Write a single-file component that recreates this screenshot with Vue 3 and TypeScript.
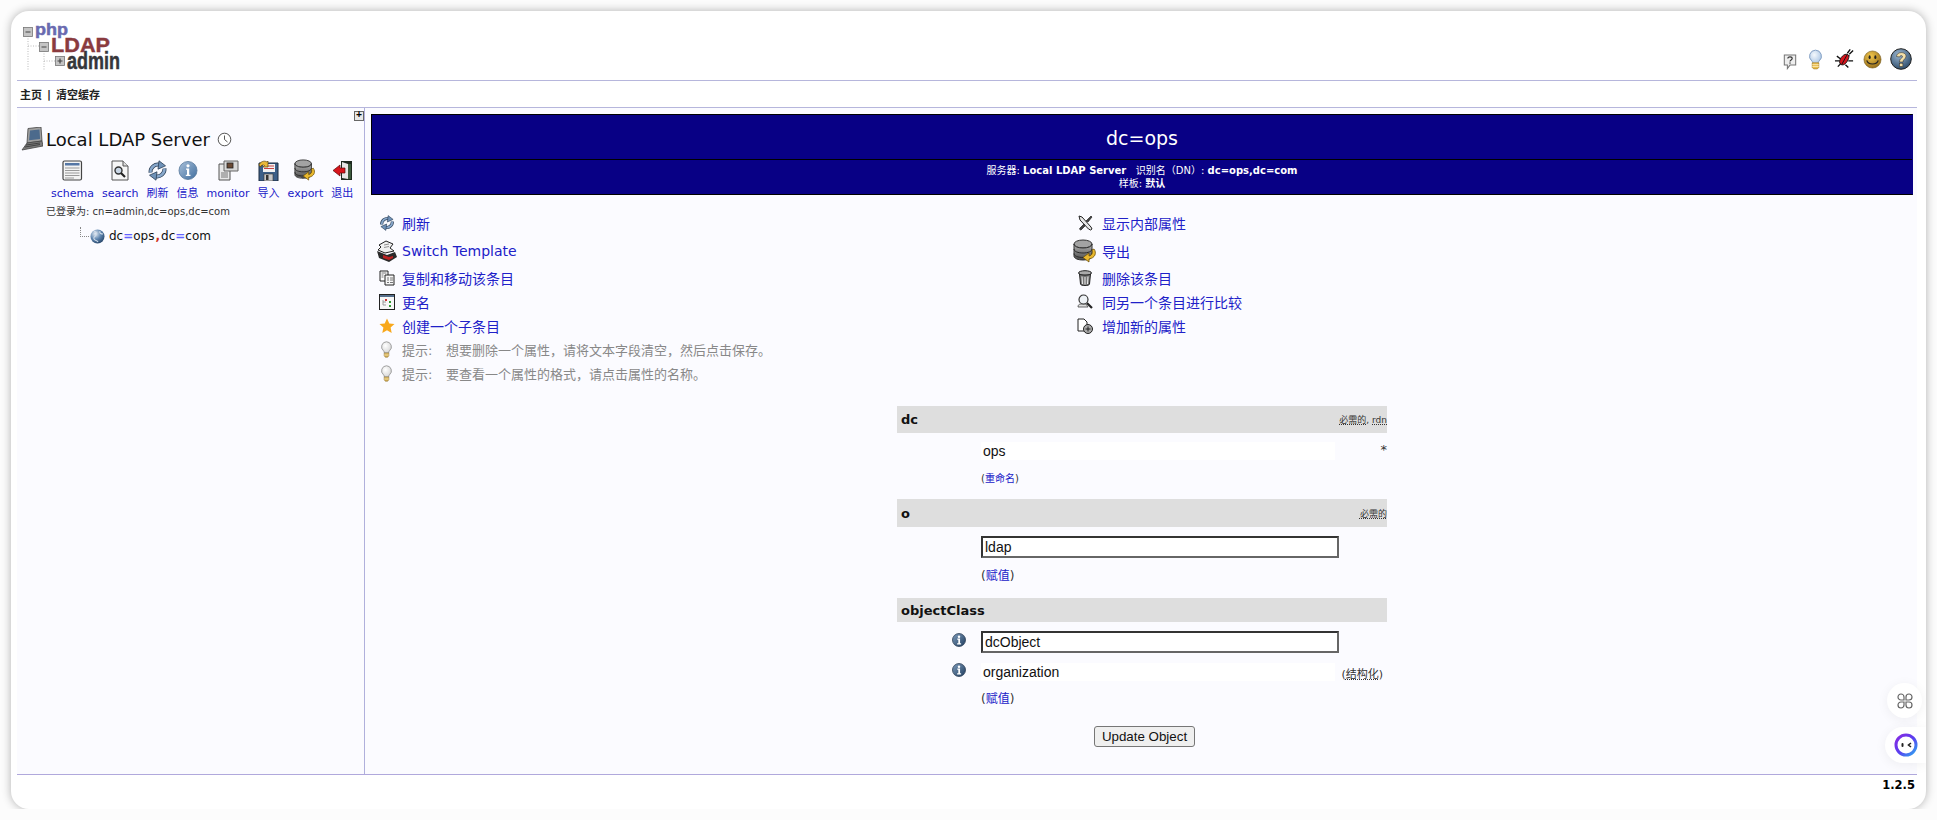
<script setup lang="ts">
interface Tool { icon: string; label: string; w: number; h: number }
const tools: Tool[] = [
  { icon: 'schema', label: 'schema', w: 21, h: 21 },
  { icon: 'search', label: 'search', w: 18, h: 21 },
  { icon: 'refresh', label: '刷新', w: 21, h: 21 },
  { icon: 'info', label: '信息', w: 20, h: 20 },
  { icon: 'monitor', label: 'monitor', w: 21, h: 21 },
  { icon: 'import', label: '导入', w: 21, h: 21 },
  { icon: 'export', label: 'export', w: 22, h: 22 },
  { icon: 'logout', label: '退出', w: 21, h: 21 },
]
interface Action { icon: string; label: string; size: number; h: number }
const actions: Action[] = [
  { icon: 'refresh', label: '刷新', size: 16, h: 25 },
  { icon: 'tools', label: '显示内部属性', size: 16, h: 25 },
  { icon: 'template', label: 'Switch Template', size: 22, h: 31 },
  { icon: 'export', label: '导出', size: 24, h: 31 },
  { icon: 'copy', label: '复制和移动该条目', size: 16, h: 23 },
  { icon: 'trash', label: '删除该条目', size: 16, h: 23 },
  { icon: 'rename', label: '更名', size: 16, h: 25 },
  { icon: 'compare', label: '同另一个条目进行比较', size: 16, h: 25 },
  { icon: 'star', label: '创建一个子条目', size: 16, h: 23 },
  { icon: 'add', label: '增加新的属性', size: 16, h: 23 },
]
const tips = ['想要删除一个属性，请将文本字段清空，然后点击保存。', '要查看一个属性的格式，请点击属性的名称。']
const topIcons = [
  { icon: 'chat', w: 14, h: 16 },
  { icon: 'bulb-top', w: 15, h: 21 },
  { icon: 'bug', w: 21, h: 22 },
  { icon: 'smile', w: 19, h: 20 },
  { icon: 'help', w: 22, h: 22 },
]
</script>

<template>
  <svg class="defs" width="0" height="0" aria-hidden="true">
    <defs>
      <linearGradient id="gBlue" x1="0" y1="0" x2="1" y2="1"><stop offset="0" stop-color="#a9c0da" /><stop offset="1" stop-color="#3f6d9e" /></linearGradient>
      <linearGradient id="gBlueD" x1="0" y1="0" x2="1" y2="1"><stop offset="0" stop-color="#7f9cbc" /><stop offset="1" stop-color="#1e3c5e" /></linearGradient>
      <linearGradient id="gGrey" x1="0" y1="0" x2="0" y2="1"><stop offset="0" stop-color="#b5b5b5" /><stop offset="1" stop-color="#4a4a4a" /></linearGradient>
      <radialGradient id="gGlobe" cx=".35" cy=".3" r=".8"><stop offset="0" stop-color="#e8eef5" /><stop offset=".5" stop-color="#5f86b0" /><stop offset="1" stop-color="#1f3d60" /></radialGradient>
      <radialGradient id="gGold" cx=".4" cy=".3" r=".8"><stop offset="0" stop-color="#f2c84e" /><stop offset="1" stop-color="#8d6414" /></radialGradient>
      <radialGradient id="gHelp" cx=".4" cy=".3" r=".8"><stop offset="0" stop-color="#9db8d2" /><stop offset="1" stop-color="#21405f" /></radialGradient>
      <radialGradient id="gGlass" cx=".4" cy=".35" r=".7"><stop offset="0" stop-color="#ffffff" /><stop offset="1" stop-color="#d4d4d4" /></radialGradient>
      <radialGradient id="gGlassB" cx=".4" cy=".35" r=".7"><stop offset="0" stop-color="#f4f8fc" /><stop offset="1" stop-color="#a8c4e4" /></radialGradient>
      <linearGradient id="gRing" x1="0" y1="0" x2="1" y2="1"><stop offset="0" stop-color="#8a2be2" /><stop offset=".5" stop-color="#5a3df0" /><stop offset="1" stop-color="#2fa8f0" /></linearGradient>
    </defs>
    <symbol id="schema" viewBox="0 0 21 21">
      <rect x="1" y="1" width="18.5" height="19" rx="1.500" fill="#f4f4f4" stroke="#444" stroke-width="1.200" />
      <rect x="3" y="3" width="14.500" height="2.500" fill="#5577a5" />
      <path d="M3 8h14.500M3 10.500h14.500M3 13h14.500M3 15.500h14.500M3 18h9" stroke="#9a9a9a" stroke-width="1" />
    </symbol>
    <symbol id="search" viewBox="0 0 18 21">
      <path d="M1 1h11l5 5v14H1z" fill="#f6f6f6" stroke="#555" />
      <path d="M12 1v5h5" fill="#ddd" stroke="#555" />
      <circle cx="7.500" cy="10.500" r="3.500" fill="#c9d6e4" stroke="#333" stroke-width="1.400" />
      <path d="M10 13l4 4" stroke="#222" stroke-width="2.200" />
    </symbol>
    <symbol id="refresh" viewBox="0 0 21 21">
      <g id="refresh-half">
        <path d="M3.500 12.500A7.500 7.500 0 0 1 13 4.800" fill="none" stroke="#2c3f55" stroke-width="4" />
        <path d="M3.500 12.500A7.500 7.500 0 0 1 13 4.800" fill="none" stroke="#88a8cc" stroke-width="2.400" />
        <path d="M12 .8l6.500 5-7.500 3.400z" fill="#6f92b8" stroke="#2c3f55" stroke-width=".8" />
      </g>
      <use href="#refresh-half" transform="rotate(180 10.500 10.500)" />
    </symbol>
    <symbol id="info" viewBox="0 0 20 20">
      <circle cx="10" cy="10.500" r="9" fill="url(#gBlue)" stroke="#56779a" stroke-width=".8" />
      <circle cx="10" cy="5.800" r="1.600" fill="#fff" />
      <path d="M8 8.500h3.200v6.200H12.500V16H7.800v-1.300H9V9.800H8z" fill="#fff" />
    </symbol>
    <symbol id="info-d" viewBox="0 0 20 20">
      <circle cx="10" cy="10" r="9.300" fill="url(#gBlueD)" stroke="#1c2f46" stroke-width="1" />
      <circle cx="10" cy="5.300" r="1.800" fill="#fff" />
      <path d="M7.500 8h4v6.700H13V16.300H7.300v-1.600H9V9.600H7.500z" fill="#fff" />
    </symbol>
    <symbol id="monitor" viewBox="0 0 21 21">
      <path d="M1 4h11v16H1z" fill="#e8e8e8" stroke="#555" />
      <path d="M6 1h14v10H6z" fill="#d8d8d8" stroke="#666" />
      <rect x="9" y="3" width="6" height="5" fill="#6b4a35" stroke="#222" stroke-width=".8" />
      <path d="M3 13h7M3 15h7M3 17h7" stroke="#777" />
    </symbol>
    <symbol id="import" viewBox="0 0 21 21">
      <path d="M1 3h19v18H1z" fill="#3c5f88" stroke="#1d2c40" />
      <rect x="5" y="4" width="12" height="8" fill="#f2f2f2" />
      <path d="M6 6h10M6 8.500h10" stroke="#c44" />
      <rect x="6" y="14" width="9" height="7" fill="#c8c8c8" stroke="#333" stroke-width=".6" />
      <rect x="8" y="15" width="2.500" height="5" fill="#333" />
      <path d="M1 5c1-3 5-5 8-3l1-1v6H5l1.500-1.500C5 4.500 3 5 2.500 7z" fill="#e9b93a" stroke="#5e4408" stroke-width=".7" />
    </symbol>
    <symbol id="export" viewBox="0 0 24 24">
      <ellipse cx="10" cy="5" rx="9" ry="4" fill="#a3a3a3" stroke="#333" />
      <path d="M1 5v12c0 2.500 4 4 9 4s9-1.500 9-4V5c0 2.500-4 4-9 4s-9-1.500-9-4z" fill="url(#gGrey)" stroke="#333" />
      <path d="M1 10c0 2.500 4 4 9 4s9-1.500 9-4M1 14.500c0 2.500 4 4 9 4s9-1.500 9-4" fill="none" stroke="#2a2a2a" />
      <path d="M21 10c3 4 1 9-5 10v3l-6-4.500 6-4.500v3c3-.5 4-3.500 3-6z" fill="#eab92e" stroke="#6e5208" stroke-width=".8" />
    </symbol>
    <symbol id="logout" viewBox="0 0 21 21">
      <path d="M9 1h11v19H9z" fill="#1e2a20" />
      <path d="M10 2l6 2v15l-6-1z" fill="#e6e6e6" />
      <path d="M16 4h3v15h-3z" fill="#3c5a3e" />
      <path d="M1 10.500L8 5v3h5v5H8v3z" fill="#d8141c" stroke="#5a0a0a" stroke-width=".7" />
    </symbol>
    <symbol id="server" viewBox="0 0 22 24">
      <path d="M7 1.500L20 0l1 14-15 2z" fill="#9f9f9f" stroke="#444" stroke-width=".8" />
      <path d="M9 3.500l9.500-1 .6 9.500-11 1.200z" fill="#4c6a8c" />
      <path d="M6 16l15-2 1 5L1 23z" fill="#7c7c7c" stroke="#444" stroke-width=".8" />
      <path d="M5 18l14-2M4 20l15-2.500" stroke="#333" stroke-width=".8" />
    </symbol>
    <symbol id="clock" viewBox="0 0 15 15">
      <circle cx="7.500" cy="7.500" r="6.300" fill="#fff" stroke="#555" stroke-width="1" />
      <path d="M7.500 3.500v4l3 2.500" fill="none" stroke="#444" stroke-width=".9" />
    </symbol>
    <symbol id="globe" viewBox="0 0 15 15">
      <circle cx="7.500" cy="7.500" r="7" fill="url(#gGlobe)" />
      <path d="M4 2c2 1 3 2 2 4S3 8 4 10s3 1 4 3M10 2c-1 2 1 3 3 3" fill="none" stroke="#cfdbe8" stroke-width="1.100" />
    </symbol>
    <symbol id="tools" viewBox="0 0 16 16">
      <path d="M2 1l3 1 9 10 1 2-1.500 1-2-1L3 5z" fill="#e8e8e8" stroke="#222" />
      <path d="M14 1l1 1-4 5-2-1zM7 9l-4 4c-1 1 0 2 1 2l4-4z" fill="#444" stroke="#222" stroke-width=".7" />
    </symbol>
    <symbol id="template" viewBox="0 0 22 22">
      <path d="M10 1l7 3-3 4 4 3-9 2-7-3 3-3-2-2z" fill="#f0f0f0" stroke="#222" />
      <path d="M1 11l10 4 8-3 2 5-8 5-10-4z" fill="#2a2a2a" />
      <path d="M7 15l6 2 4-1v2l-4 2-6-2z" fill="#b22" />
      <path d="M8 5l5-1M8 7.500l5-1" stroke="#777" stroke-width=".8" />
    </symbol>
    <symbol id="copy" viewBox="0 0 16 16">
      <path d="M1 1h8v10H1z" fill="#fff" stroke="#222" />
      <path d="M6 5h9v10H6z" fill="#f6f6f6" stroke="#222" />
      <path d="M2.500 3h5M2.500 5h2M2.500 7h2M8 8h2M11 8h3M8 10h2M11 10h3M8 12.500h2M11 12.500h3" stroke="#555" stroke-width=".8" />
    </symbol>
    <symbol id="rename" viewBox="0 0 16 16">
      <rect x=".5" y=".5" width="15" height="15" fill="#f7f7f7" stroke="#222" />
      <rect x="1" y="1" width="14" height="2" fill="#566f8c" />
      <path d="M4 6v5h3M4 8h3" fill="none" stroke="#888" stroke-width=".8" />
      <rect x="6" y="5" width="2" height="2" fill="#c33" />
      <rect x="10" y="7" width="2" height="2" fill="#393" />
      <rect x="10" y="11" width="2" height="2" fill="#393" />
    </symbol>
    <symbol id="star" viewBox="0 0 16 16">
      <path d="M8 .5l2.300 5 5.200.6-3.900 3.500 1.100 5.400L8 12.300 3.300 15l1.100-5.400L.5 6.100l5.200-.6z" fill="#f8a81c" />
    </symbol>
    <symbol id="bulb" viewBox="0 0 16 22">
      <path d="M8 1a6.500 6.500 0 0 0-4 11.500c1 1 1.200 2 1.200 3h5.600c0-1 .2-2 1.200-3A6.500 6.500 0 0 0 8 1z" fill="url(#gGlass)" stroke="#8a8a8a" />
      <path d="M5 15.500h6v3.500l-1.500 2h-3L5 19z" fill="#d4ad52" stroke="#8a7030" stroke-width=".7" />
      <path d="M5 17h6M5 18.500h6" stroke="#fff2c4" stroke-width=".6" />
    </symbol>
    <symbol id="bulb-top" viewBox="0 0 16 22">
      <path d="M8 1a6.500 6.500 0 0 0-4 11.500c1 1 1.200 2 1.200 3h5.600c0-1 .2-2 1.200-3A6.500 6.500 0 0 0 8 1z" fill="url(#gGlassB)" stroke="#7f9cc0" />
      <path d="M4.500 14.500h7v5l-1.500 1.500H6l-1.500-1.500z" fill="#e8bc4c" stroke="#a67f23" stroke-width=".7" />
      <path d="M4.500 16.500h7M4.500 18.500h7" stroke="#fff2c4" stroke-width=".8" />
    </symbol>
    <symbol id="trash" viewBox="0 0 16 16">
      <ellipse cx="8" cy="3" rx="6.500" ry="2.300" fill="#aaa" stroke="#222" />
      <path d="M2.500 4l1 10c0 1 2 1.500 4.500 1.500s4.500-.5 4.500-1.500l1-10c-1 1.500-10 1.500-11 0z" fill="#777" stroke="#222" />
      <path d="M5 6.500l.5 7.500M8 7v7.500M11 6.500l-.5 7.500" stroke="#eee" />
    </symbol>
    <symbol id="compare" viewBox="0 0 16 16">
      <path d="M1 13c0-2 1-3 3-3h5l2 3z" fill="#ddd" stroke="#444" stroke-width=".8" />
      <circle cx="6.500" cy="5.500" r="4.500" fill="#eef2f6" stroke="#333" stroke-width="1.200" />
      <path d="M10 9l5 5" stroke="#222" stroke-width="2.200" />
    </symbol>
    <symbol id="add" viewBox="0 0 16 16">
      <path d="M1 1h6l3 3v9H1z" fill="#fff" stroke="#222" />
      <circle cx="11" cy="11" r="4.500" fill="#aaa" stroke="#222" />
      <path d="M11 8.500v5M8.500 11h5" stroke="#222" />
    </symbol>
    <symbol id="chat" viewBox="0 0 16 18">
      <path d="M1.500 1h13v11.500H8L5 16.500v-4H1.500z" fill="#eee" stroke="#777" stroke-width="1.200" />
      <path d="M5.500 5c0-2.500 5-2.500 5 0 0 1.800-2.500 1.500-2.500 3.500" fill="none" stroke="#333" stroke-width="1.300" />
      <rect x="7.300" y="9.500" width="1.400" height="1.400" fill="#333" />
    </symbol>
    <symbol id="bug" viewBox="0 0 22 22">
      <path d="M3 8l4 3M1 13h5M4 19l4-4M12 17l3 3M15 13h5M16 7l-3 3M17 1l-3 4M20 2l-4 4" stroke="#111" stroke-width="1.400" />
      <path d="M6 15c-1-3 3-9 7-9 3 0 3 3 2 5-1 3-4 7-7 6-1-.3-1.700-1-2-2z" fill="#d5141c" stroke="#111" />
      <path d="M14 6l-6 11" stroke="#111" />
    </symbol>
    <symbol id="smile" viewBox="0 0 20 20">
      <circle cx="10" cy="9.500" r="9" fill="url(#gGold)" stroke="#6f5312" stroke-width=".6" />
      <ellipse cx="7" cy="7" rx="1.100" ry="2" fill="#222" />
      <ellipse cx="13" cy="7" rx="1.100" ry="2" fill="#222" />
      <path d="M4 10.500c1 5 11 5 12 0" fill="none" stroke="#222" stroke-width="1.200" />
    </symbol>
    <symbol id="help" viewBox="0 0 22 22">
      <circle cx="11" cy="11" r="10.300" fill="url(#gHelp)" stroke="#222" />
      <path d="M6.500 8.500C6.500 3 16.500 3.500 16 8.500c-.2 2.700-3 2.700-3 5.500H9.500c0-3.900 3-3.700 3-5.300 0-1.500-2.500-1.500-2.800.3z" fill="#f2dfa8" stroke="#333" stroke-width=".6" />
      <rect x="9.500" y="15.200" width="3.400" height="3.400" fill="#f2dfa8" stroke="#333" stroke-width=".6" />
    </symbol>
    <symbol id="petals" viewBox="0 0 16 16">
      <path d="M7 7H4a3 3 0 1 1 3-3zM9 7h3a3 3 0 1 0-3-3zM7 9H4a3 3 0 1 0 3 3zM9 9h3a3 3 0 1 1-3 3z" fill="none" stroke="#666" stroke-width="1.200" />
    </symbol>
  </svg>

  <div class="card">
    <header class="header">
      <svg class="logo" width="125" height="59" viewBox="0 0 125 59">
        <g fill="none" stroke="#bbb" stroke-dasharray="1 1.500">
          <path d="M7 15v34M7 25h11M23 30v19M23 40h11" />
        </g>
        <g fill="#c4c4c4" stroke="#777" stroke-width=".8">
          <rect x="2.500" y="6.500" width="9" height="9" />
          <rect x="18.500" y="21.500" width="9" height="9" />
          <rect x="34.500" y="35.500" width="9" height="9" />
        </g>
        <path d="M4.500 11h5M20.500 26h5M36.500 40h5M39 37.500v5" stroke="#444" stroke-width="1.200" />
        <text class="lg" x="14" y="14" fill="#6a6ab0" font-size="17" stroke="#6a6ab0" stroke-width=".5" textLength="33" lengthAdjust="spacingAndGlyphs">php</text>
        <text class="lg" x="30" y="31" fill="#8a3b3f" font-size="21" stroke="#8a3b3f" stroke-width=".4" textLength="59" lengthAdjust="spacingAndGlyphs">LDAP</text>
        <text class="lg" x="46" y="48" fill="#35363a" font-size="23" stroke="#35363a" stroke-width=".5" textLength="53" lengthAdjust="spacingAndGlyphs">admin</text>
      </svg>
      <div class="top-icons">
        <svg v-for="t in topIcons" :key="t.icon" :width="t.w" :height="t.h"><use :href="'#' + t.icon" /></svg>
      </div>
    </header>

    <nav class="menu"><b>主页</b><b class="sep">|</b><b>清空缓存</b></nav>

    <div class="main">
      <aside class="side">
        <div class="expand">+</div>
        <div class="server">
          <svg width="22" height="24"><use href="#server" /></svg>
          <span class="server-name">Local LDAP Server</span>
          <svg width="15" height="15"><use href="#clock" /></svg>
        </div>
        <div class="tools">
          <a v-for="t in tools" :key="t.label" class="tool">
            <span class="tool-ic"><svg :width="t.w" :height="t.h"><use :href="'#' + t.icon" /></svg></span>
            <span>{{ t.label }}</span>
          </a>
        </div>
        <div class="logged">已登录为: cn=admin,dc=ops,dc=com</div>
        <div class="tree">
          <span class="branch"></span>
          <svg width="15" height="15"><use href="#globe" /></svg>
          <span class="dn">dc<i>=</i>ops<em>,</em>dc<i>=</i>com</span>
        </div>
      </aside>

      <section class="content">
        <div class="banner">
          <h1>dc=ops</h1>
          <div class="banner-sub">
            <div>服务器: <b>Local LDAP Server</b> &nbsp; 识别名（DN）: <b>dc=ops,dc=com</b></div>
            <div>样板: <b>默认</b></div>
          </div>
        </div>

        <div class="actions">
          <a v-for="a in actions" :key="a.label" class="action" :style="{ height: a.h + 'px' }">
            <span class="action-ic"><svg :width="a.size" :height="a.size"><use :href="'#' + a.icon" /></svg></span>
            <span>{{ a.label }}</span>
          </a>
          <div v-for="(t, i) in tips" :key="t" class="tip" :class="{ first: i === 0 }">
            <span class="action-ic"><svg width="13" height="17" viewBox="0 0 16 22"><use href="#bulb" /></svg></span>
            <span class="tip-label">提示:</span><span>{{ t }}</span>
          </div>
        </div>

        <div class="form">
          <div class="attr-head h1"><b>dc</b><span class="notes"><u>必需的</u>, <u>rdn</u></span></div>
          <div class="row r-ops">
            <span class="val ro">ops</span>
            <span class="star-mark">*</span>
          </div>
          <div class="more small">(<a>重命名</a>)</div>

          <div class="attr-head h2"><b>o</b><span class="notes"><u>必需的</u></span></div>
          <div class="row r-input"><span class="val input">ldap</span></div>
          <div class="more">(<a>赋值</a>)</div>

          <div class="attr-head h3"><b>objectClass</b></div>
          <div class="row r-input">
            <svg class="row-ic low" width="14" height="14"><use href="#info-d" /></svg>
            <span class="val input">dcObject</span>
          </div>
          <div class="row r-org">
            <svg class="row-ic" width="14" height="14"><use href="#info-d" /></svg>
            <span class="val ro">organization</span>
            <span class="struct">(<u>结构化</u>)</span>
          </div>
          <div class="more last">(<a>赋值</a>)</div>
          <div class="submit"><button type="button">Update Object</button></div>
        </div>
      </section>
    </div>

    <footer class="footer"><b>1.2.5</b></footer>

    <div class="float-a"><svg width="16" height="16"><use href="#petals" /></svg></div>
    <div class="float-b">
      <svg width="24" height="24" viewBox="0 0 24 24">
        <circle cx="12" cy="12" r="10" fill="#fff" stroke="url(#gRing)" stroke-width="3" />
        <rect x="7.500" y="10" width="2" height="4" rx="1" fill="#222" />
        <path d="M17 10l-2.500 2 2.500 2" fill="none" stroke="#222" stroke-width="1.600" />
      </svg>
    </div>
  </div>
</template>

<style scoped>
.defs { position: absolute; }
.card {
  position: relative;
  box-sizing: border-box;
  width: 1915px;
  height: 798px;
  margin: 11px 0 0 11px;
  padding: 0 9px 0 6px;
  background: #fff;
  border-radius: 18px;
  box-shadow: 0 0 10px rgba(0, 0, 0, .3);
  overflow: hidden;
  font-family: "DejaVu Sans", "Noto Sans CJK SC", sans-serif;
  color: #000;
}
.header {
  box-sizing: border-box;
  height: 70px;
  border-bottom: 1px solid #b6b6dc;
  display: flex;
  justify-content: space-between;
  align-items: flex-start;
}
.logo { margin: 10px 0 0 4px; }
.lg { font-family: "Liberation Sans", sans-serif; font-weight: 700; }
.top-icons {
  align-self: flex-end;
  display: flex;
  align-items: flex-end;
  gap: 8px;
  padding: 0 5px 10px 0;
}
.top-icons svg { display: block; }
.top-icons svg:nth-child(-n + 2) { margin-right: 3px; }
.menu {
  box-sizing: border-box;
  height: 27px;
  border-bottom: 1px solid #b6b6dc;
  display: flex;
  align-items: center;
  padding-left: 3px;
  font-size: 11px;
  color: #222;
}
.sep { margin: 0 5px; }
.main { display: flex; height: 666px; }
.side {
  position: relative;
  box-sizing: border-box;
  width: 348px;
  flex: none;
  background: #fbfbff;
  border-right: 1px solid #b0b0dc;
  padding: 19px 0 0 4px;
}
.expand {
  position: absolute;
  left: 337px;
  top: 3px;
  box-sizing: border-box;
  width: 10px;
  height: 10px;
  border: 1px solid #666;
  background: #e8e8e8;
  font: 700 10px/7px "Liberation Mono", monospace;
  text-align: center;
}
.server { display: flex; align-items: center; height: 24px; }
.server svg { display: block; }
.server-name { font-size: 18px; margin: 0 7px 0 3px; color: #111; }
.tools { display: flex; gap: 8px; margin: 8px 0 0 30px; }
.tool {
  display: flex;
  flex-direction: column;
  align-items: center;
  color: #2020c8;
  font-size: 11px;
  line-height: 14px;
}
.tool-ic { height: 22px; margin-bottom: 6px; display: flex; align-items: center; }
.logged { margin: 4px 0 0 25px; font-size: 10px; line-height: 14px; color: #333; }
.tree { display: flex; align-items: center; height: 16px; margin: 9px 0 0 59px; }
.branch {
  width: 8px;
  height: 9px;
  margin: -8px 1px 0 0;
  border-left: 1px dotted #888;
  border-bottom: 1px dotted #888;
}
.dn { margin-left: 4px; font-size: 12px; color: #111; }
.dn i { font-style: normal; color: #6464ff; font-weight: 700; }
.dn em { font-style: normal; color: #d03020; margin: 0 1px; font-weight: 700; }
.content {
  flex: 1;
  min-width: 0;
  background: #fbfbff;
  padding: 6px 4px 0 6px;
}
.banner {
  box-sizing: border-box;
  height: 81px;
  background: #080085;
  border: 1px solid #000;
  border-right-color: #080085;
  color: #fff;
  text-align: center;
}
.banner h1 {
  box-sizing: border-box;
  height: 45px;
  margin: 0;
  border-bottom: 1px solid #000;
  font-size: 19px;
  font-weight: 400;
  line-height: 46px;
}
.banner-sub { font-size: 10px; line-height: 13px; padding-top: 4px; }
.actions {
  display: grid;
  grid-template-columns: 700px 1fr;
  margin-top: 15px;
}
.action { display: flex; align-items: center; color: #2020c8; font-size: 14px; }
.action-ic { box-sizing: border-box; width: 31px; display: flex; justify-content: center; flex: none; }
.action:nth-child(even) .action-ic { padding-right: 4px; }
.action-ic svg { display: block; }
.tip {
  grid-column: 1;
  height: 23px;
  display: flex;
  align-items: center;
  color: #888;
  font-size: 13px;
  white-space: nowrap;
}
.tip.first { height: 25px; }
.tip-label { width: 44px; flex: none; }
.form { width: 490px; margin: 21px 0 0 526px; font-size: 13px; }
.attr-head {
  display: flex;
  justify-content: space-between;
  align-items: center;
  background: #dedede;
  padding-left: 4px;
  font-size: 13px;
}
.attr-head b { color: #111; }
.h1 { height: 27px; }
.h2 { height: 28px; }
.h3 { height: 24px; }
.notes { font-size: 9px; color: #333; }
.notes u, .struct u { text-decoration: underline dotted; }
.row { position: relative; padding-left: 84px; display: flex; align-items: center; }
.r-ops { height: 18px; margin-top: 9px; }
.r-input { height: 22px; margin-top: 9px; }
.r-org { height: 18px; margin-top: 10px; }
.val { font-family: "Liberation Sans", sans-serif; font-size: 14px; color: #111; box-sizing: border-box; }
.ro { width: 354px; height: 18px; line-height: 18px; padding-left: 2px; background: #fff; }
.input {
  width: 358px;
  height: 22px;
  line-height: 18px;
  padding-left: 2px;
  background: #fff;
  border: 2px solid;
  border-color: #333 #666 #666 #333;
}
.row-ic { position: absolute; left: 55px; top: 0; }
.row-ic.low { top: 2px; }
.star-mark { position: absolute; right: 0; top: 0; font-size: 13px; color: #333; }
.struct { position: absolute; right: 4px; top: 2px; font-size: 11px; color: #333; }
.more { padding-left: 84px; margin-top: 10px; font-size: 12px; line-height: 16px; color: #333; height: 30px; }
.more.small { font-size: 10px; margin-top: 11px; height: 28px; }
.more.last { height: 35px; }
.more a { color: #2020c8; }
.submit { display: flex; justify-content: center; padding-left: 5px; }
.submit button {
  box-sizing: border-box;
  width: 101px;
  height: 21px;
  padding: 0;
  background: #efefef;
  border: 1px solid #767676;
  border-radius: 3px;
  font: 13.330px "Liberation Sans", sans-serif;
  color: #111;
}
.footer {
  box-sizing: border-box;
  height: 35px;
  border-top: 1px solid #b0a8dc;
  text-align: right;
  padding: 2px 2px 0 0;
  font-size: 11.500px;
  line-height: 16px;
}
.float-a, .float-b {
  position: absolute;
  display: flex;
  align-items: center;
  justify-content: center;
  background: #fff;
  box-shadow: 0 2px 12px rgba(0, 0, 0, .06);
}
.float-a { left: 1876px; top: 672px; width: 35px; height: 35px; border-radius: 50%; }
.float-b { left: 1874px; top: 716px; width: 41px; height: 36px; border-radius: 18px 0 0 18px; }
</style>

<style>
html, body { margin: 0; background: #fcfcfc; }
</style>
